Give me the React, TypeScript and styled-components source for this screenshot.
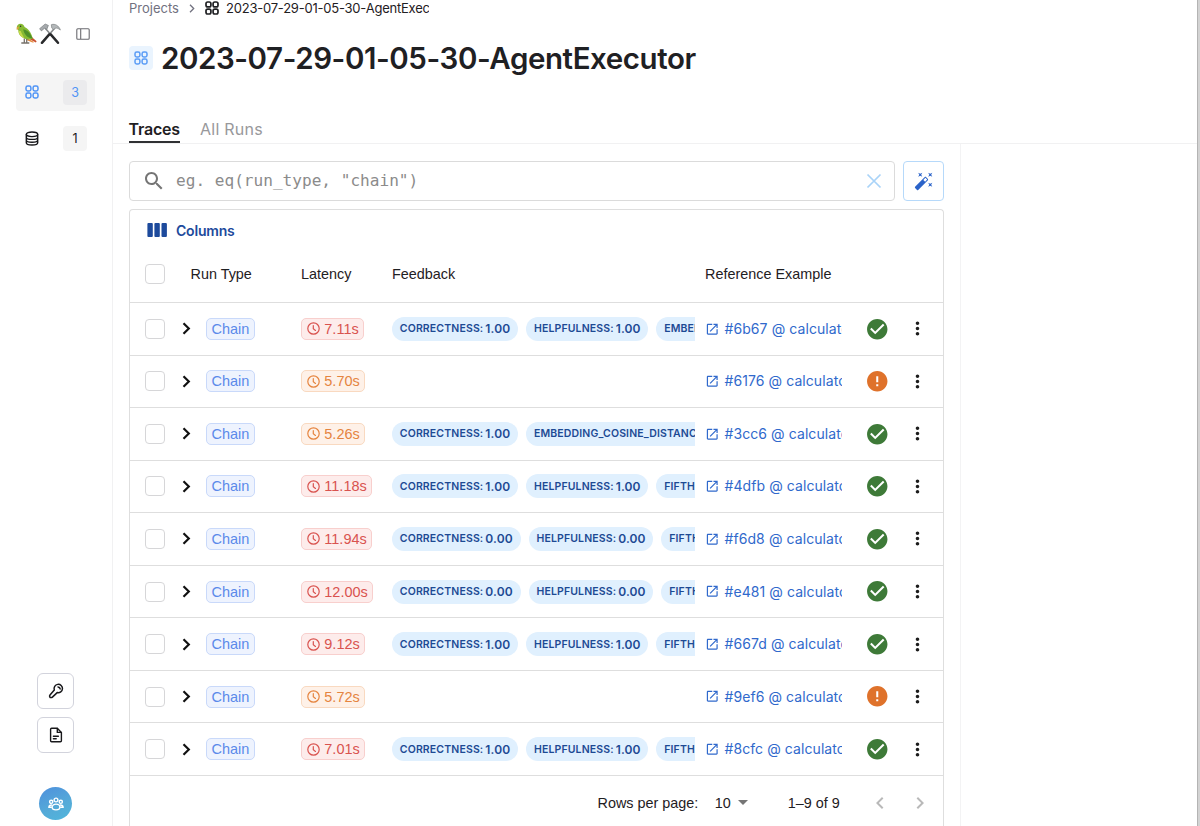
import React from "react";
import styled, { createGlobalStyle, css } from "styled-components";

const sans = `"Inter", "Liberation Sans", sans-serif`;
const grotesk = `"Liberation Sans", Arial, sans-serif`;

const GlobalStyle = createGlobalStyle`
  *, *::before, *::after { box-sizing: border-box; }
  html, body { margin: 0; padding: 0; background: #fff; }
  body { font-family: ${sans}; color: #1f2023; overflow: hidden; }
  button { font: inherit; padding: 0; background: none; border: 0; color: inherit; }
`;

/* ---------- shell ---------- */

const Shell = styled.div`
  display: flex;
  width: 100%;
  height: 826px;
  overflow: hidden;
`;

const Sidebar = styled.aside`
  display: flex;
  flex-direction: column;
  flex: 0 0 113px;
  padding: 20px 17px 6px 16px;
  border-right: 1px solid #f1f1f2;
`;

const Brand = styled.div`
  display: flex;
  align-items: center;
  gap: 1px;
  height: 28px;
  margin-bottom: 25px;
`;

const PanelIcon = styled.span`
  display: flex;
  margin-left: 14px;
  color: #6b6b70;
`;

const NavItem = styled.button<{ $active?: boolean }>`
  display: flex;
  align-items: center;
  justify-content: space-between;
  width: 79px;
  height: 38px;
  margin-bottom: 8.5px;
  padding: 0 8px 0 9px;
  border-radius: 4px;
  color: ${(p) => (p.$active ? "#4f94f6" : "#18181b")};
  background: ${(p) => (p.$active ? "#f5f5f5" : "transparent")};
`;

const NavCount = styled.span<{ $active?: boolean }>`
  display: flex;
  align-items: center;
  justify-content: center;
  width: 24px;
  height: 25px;
  border-radius: 4px;
  font-size: 12.5px;
  background: ${(p) => (p.$active ? "#ebebed" : "#f5f5f5")};
`;

const SidebarFooter = styled.div`
  display: flex;
  flex-direction: column;
  align-items: center;
  gap: 8px;
  margin-top: auto;
`;

const SquareButton = styled.button`
  display: flex;
  align-items: center;
  justify-content: center;
  width: 37px;
  height: 36px;
  border: 1px solid #d2d3dc;
  border-radius: 6px;
  color: #18181b;
`;

const Avatar = styled.div`
  display: flex;
  align-items: center;
  justify-content: center;
  width: 33px;
  height: 33px;
  margin-top: 26px;
  border-radius: 50%;
  color: #fff;
  background: linear-gradient(155deg, #4f94dc 10%, #55abd8 60%, #50b6dc 100%);
`;

const Main = styled.main`
  display: flex;
  flex-direction: column;
  flex: 1;
  min-width: 0;
`;

const ScrollTrack = styled.div`
  flex: 0 0 3px;
  background: #d3d3d3;
  border-left: 1px solid #b4b4b4;
`;

/* ---------- page header ---------- */

const Breadcrumbs = styled.nav`
  display: flex;
  align-items: center;
  height: 16px;
  padding-left: 16px;
  font-size: 13px;
`;

const CrumbLink = styled.span`
  width: 50px;
  color: #71717f;
`;

const CrumbChevron = styled.span`
  display: flex;
  width: 26px;
  justify-content: center;
  color: #71717f;
`;

const CrumbCurrent = styled.span`
  width: 203px;
  margin-left: 7px;
  overflow: hidden;
  white-space: nowrap;
  letter-spacing: -0.22px;
`;

const TitleRow = styled.div`
  display: flex;
  align-items: center;
  height: 40px;
  margin-top: 22px;
  padding-left: 16px;
`;

const TitleIcon = styled.span`
  display: flex;
  align-items: center;
  justify-content: center;
  width: 24px;
  height: 24px;
  border-radius: 4px;
  color: #5a9cf6;
  background: #eaf4fe;
`;

const Title = styled.h1`
  margin: 0 0 0 8px;
  font-size: 29.5px;
  font-weight: 600;
  letter-spacing: -0.42px;
  white-space: nowrap;
`;

const Tabs = styled.div`
  display: flex;
  gap: 20px;
  height: 28px;
  margin-top: 38px;
  padding-left: 15.5px;
  border-bottom: 1px solid #f1f1f2;
`;

const Tab = styled.button<{ $active?: boolean }>`
  height: 27px;
  font-size: 16px;
  white-space: nowrap;
  ${(p) =>
    p.$active
      ? css`
          width: 51px;
          font-weight: 600;
          letter-spacing: -0.22px;
          color: #1f2023;
          border-bottom: 2px solid #303134;
        `
      : css`
          padding: 0 0 1px 0.5px;
          letter-spacing: 0.25px;
          color: #98989b;
        `}
`;

/* ---------- content ---------- */

const Content = styled.section`
  width: 848px;
  flex: 1;
  min-height: 0;
  display: flex;
  flex-direction: column;
  gap: 8px;
  padding: 17px 16px 0 15.5px;
  border-right: 1px solid #f3f3f4;
`;

const SearchRow = styled.div`
  display: flex;
  gap: 8px;
  flex: 0 0 40px;
`;

const SearchBox = styled.div`
  display: flex;
  align-items: center;
  width: 766.5px;
  padding: 0 10px 0 12px;
  border: 1px solid #dbdbdb;
  border-radius: 4px;
  color: #757575;
`;

const SearchHint = styled.span`
  flex: 1;
  margin: 0 0 1px 10.5px;
  font-family: "DejaVu Sans Mono", monospace;
  font-size: 16.1px;
  color: #8b8b8b;
`;

const ClearIcon = styled.span`
  display: flex;
  color: #a9d3f8;
`;

const WandButton = styled.button`
  display: flex;
  align-items: center;
  justify-content: center;
  width: 41px;
  border: 1px solid #b6d9fa;
  border-radius: 4px;
  color: #2b63c9;
`;

const TablePanel = styled.div`
  flex: 1;
  width: 815px;
  border: 1px solid #dedede;
  border-bottom: 0;
  border-radius: 4px 4px 0 0;
`;

const ColumnsButton = styled.button`
  display: flex;
  align-items: center;
  gap: 9px;
  height: 40px;
  padding-left: 17.5px;
  font-size: 14px;
  font-weight: 600;
  letter-spacing: -0.2px;
  color: #1d4a9c;
`;

const gridRow = css`
  display: grid;
  grid-template-columns: 46px 30.5px 95px 91px 303px 10px 137px 70px 1fr;
  align-items: center;
  border-bottom: 1px solid #dedede;
`;

const HeaderRow = styled.div`
  ${gridRow}
  height: 53px;
  padding-bottom: 4px;
  font-family: ${grotesk};
  font-size: 14.4px;
  white-space: nowrap;
`;

const HeaderCell = styled.span<{ $from: number; $span?: number; $indent?: number }>`
  grid-column: ${(p) => p.$from} / span ${(p) => p.$span ?? 1};
  padding-left: ${(p) => p.$indent ?? 0}px;
`;

const Row = styled.div`
  ${gridRow}
  height: 52.55px;
`;

const Checkbox = styled.span`
  width: 20px;
  height: 20px;
  margin-left: 15.5px;
  border: 1px solid #d6d6d8;
  border-radius: 4px;
`;

const Expander = styled.span`
  display: flex;
  justify-content: center;
  width: 22px;
  color: #111;
`;

const tones = {
  blue: { ink: "#5b8aea", fill: "#eef3fe", line: "#c9d9fa" },
  red: { ink: "#d9534f", fill: "#fdeceb", line: "#f8cfcd" },
  orange: { ink: "#e5843f", fill: "#fef1e8", line: "#f9d9c0" },
};

const Tag = styled.span<{ $tone: keyof typeof tones }>`
  display: inline-flex;
  align-items: center;
  justify-self: start;
  gap: 4.8px;
  height: 22px;
  padding: 0 4.5px;
  border: 1px solid ${(p) => tones[p.$tone].line};
  border-radius: 5px;
  font-family: ${grotesk};
  font-size: 14.5px;
  white-space: nowrap;
  color: ${(p) => tones[p.$tone].ink};
  background: ${(p) => tones[p.$tone].fill};
`;

const FeedbackList = styled.div`
  display: flex;
  gap: 8px;
  overflow: hidden;
`;

const FeedbackChip = styled.span`
  display: flex;
  align-items: center;
  flex: none;
  gap: 2px;
  height: 24px;
  padding: 0 7.8px;
  border-radius: 12px;
  font-size: 10.5px;
  font-weight: 600;
  letter-spacing: 0.14px;
  white-space: nowrap;
  color: #1d4a94;
  background: #e0f0fe;
`;

const Score = styled.b`
  font-size: 12px;
  font-weight: 600;
`;

const ExampleLink = styled.a`
  grid-column: 7;
  display: flex;
  align-items: center;
  gap: 5px;
  padding-bottom: 1px;
  overflow: hidden;
  white-space: nowrap;
  font-size: 14px;
  letter-spacing: 0.08px;
  color: #3069cc;
`;

const LinkIcon = styled.span`
  display: flex;
  flex: none;
  padding-top: 1px;
`;

const Status = styled.span<{ $ok: boolean }>`
  display: flex;
  justify-content: center;
  color: ${(p) => (p.$ok ? "#3e7a38" : "#df722b")};
`;

const More = styled.span`
  display: flex;
  margin-left: -5.5px;
  color: #1c1c1c;
`;

const Pagination = styled.footer`
  display: flex;
  align-items: center;
  height: 54px;
  padding-left: 468px;
  font-family: ${grotesk};
  font-size: 14.4px;
  white-space: nowrap;
`;

const PageSize = styled.span`
  display: flex;
  align-items: center;
  width: 73px;
  margin-left: 16.5px;
`;

const Caret = styled.span`
  width: 0;
  margin-left: 7px;
  border: 5.2px solid transparent;
  border-top-color: #757575;
  border-bottom: 0;
`;

const PageArrow = styled.span<{ $gap: number }>`
  display: flex;
  margin-left: ${(p) => p.$gap}px;
  color: #b9b9b9;
`;

/* ---------- icons ---------- */

const GridIcon = ({ size = 14, weight = 1.5 }: { size?: number; weight?: number }) => (
  <svg width={size} height={size} viewBox="0 0 14 14" fill="none" stroke="currentColor" strokeWidth={weight}>
    <rect x="1" y="1" width="4.9" height="4.9" rx="1.700" />
    <rect x="8.100" y="1" width="4.900" height="4.900" rx="1.700" />
    <rect x="1" y="8.100" width="4.900" height="4.900" rx="1.700" />
    <rect x="8.100" y="8.100" width="4.900" height="4.900" rx="1.700" />
  </svg>
);

const Parrot = () => (
  <svg width="22" height="22" viewBox="0 0 22 22">
    <path d="M14 12.500l6.600 5.700-.7 1.400-7.700-4.200z" fill="#c8502d" />
    <path d="M10.500 14.500l7.800 4.700-1.800.4-6.600-2.800z" fill="#e58a3a" />
    <path d="M.8 5C.6 2.400 2.300.8 4.500.8c2.300 0 3.500 1.300 4.100 3.300 3 1.400 5.400 3.900 7 7.900l1.200 3.400c-2.400 1.300-5.800 1.500-8.300.1C4.800 13.800 2.200 11.300 2.400 7.500z" fill="#86ba33" />
    <path d="M7.200 6.200c3.300.5 6 2.700 7.900 6.200l1.500 3c-4.500-.2-8.500-3.500-9.400-9.200z" fill="#4f9029" />
    <path d="M2.600 7.800c.2 3.300 2.300 6.200 5.400 7.700-.2-2.400-2.600-4.400-3.200-7.400z" fill="#c6d94a" />
    <path d="M2.600 3.400C.8 3.400.2 4.900.8 7c1.200-.3 2.100-1.300 2.200-2.400z" fill="#d9a441" />
    <circle cx="4.600" cy="3.300" r=".7" fill="#2b2b20" />
    <path d="M8.300 15.500v4.200M10.700 15.900v3.800M5.300 20h8" stroke="#77716a" strokeWidth="1.300" fill="none" />
  </svg>
);

const Tools = () => (
  <svg width="22" height="22" viewBox="0 0 22 22" fill="none">
    <path d="M6 5l12.300 14M15.800 5L3.700 19" stroke="#85888a" strokeWidth="1.600" />
    <path d="M11.700 11.400L19 19.800M10.300 11.400L2.900 19.800" stroke="#292a2c" strokeWidth="2.500" strokeLinecap="round" />
    <path d="M.6 5.700L6.200 1l3.200 1.400L7.800 6.400 5.600 5.200 2.400 7.900z" fill="#a6aaad" stroke="#6f7376" strokeWidth=".6" />
    <path d="M12.300 1.700c3.700-1.300 7.400.8 9.100 5.300-1.900-1.500-3.600-2.200-5.200-1.800l-1.500 1.600-1.900-1.700z" fill="#b4b8ba" stroke="#6f7376" strokeWidth=".6" />
  </svg>
);

const SidebarToggle = () => (
  <svg width="14" height="12" viewBox="0 0 14 12" fill="none" stroke="currentColor" strokeWidth="1.100">
    <rect x=".8" y=".8" width="12.400" height="10.400" rx="1" />
    <path d="M4.700 1v10" />
  </svg>
);

const DatabaseIcon = () => (
  <svg width="14" height="15" viewBox="0 0 14 15" fill="none" stroke="currentColor" strokeWidth="1.400">
    <ellipse cx="7" cy="3.300" rx="5.700" ry="2.300" />
    <path d="M1.300 3.300v8.400C1.300 13 3.900 14 7 14s5.700-1 5.700-2.300V3.300M1.300 6.200C1.300 7.400 3.900 8.400 7 8.400s5.700-1 5.700-2.200M1.300 9C1.300 10.200 3.900 11.200 7 11.200s5.700-1 5.700-2.200" />
  </svg>
);

const KeyIcon = () => (
  <svg width="16" height="16" viewBox="0 0 16 16" fill="none" stroke="currentColor" strokeWidth="1.500" strokeLinejoin="round" strokeLinecap="round">
    <path d="M6.300 6.900a4.200 4.200 0 1 1 2.900 2.700L4.400 14.100c-.6.500-1.400.5-2.400.3-.6-.9-.6-1.800 0-2.500z" />
    <path d="M10 3.900c1.200.1 2 .9 2.200 2" />
  </svg>
);

const DocIcon = () => (
  <svg width="14" height="16" viewBox="0 0 14 16" fill="none" stroke="currentColor" strokeWidth="1.400" strokeLinejoin="round" strokeLinecap="round">
    <path d="M8.300 1.300H2.600c-.6 0-1 .4-1 1v11.400c0 .6.4 1 1 1h8.800c.6 0 1-.4 1-1V5.400z" />
    <path d="M8.300 1.500v3.900h3.900M4.400 9.300h5M4.400 11.700h2.800" />
  </svg>
);

const PeopleIcon = () => (
  <svg width="16" height="14" viewBox="0 0 16 14" fill="none" stroke="currentColor" strokeWidth="1.400" strokeLinecap="round">
    <circle cx="8" cy="3" r="1.900" />
    <circle cx="3.200" cy="4.800" r="1.600" />
    <circle cx="12.800" cy="4.800" r="1.600" />
    <ellipse cx="8" cy="10" rx="3.900" ry="2.900" />
    <path d="M3.600 8C2 8.100.9 8.900.9 10.300h2.400M12.400 8c1.600.1 2.700.9 2.700 2.300h-2.400" />
  </svg>
);

const FilledIcon = ({ d, size }: { d: string; size: number }) => (
  <svg width={size} height={size} viewBox="0 0 24 24" fill="currentColor">
    <path d={d} />
  </svg>
);

const paths = {
  search:
    "M15.500 14h-.79l-.28-.27C15.410 12.590 16 11.110 16 9.500 16 5.910 13.090 3 9.500 3S3 5.910 3 9.500 5.910 16 9.500 16c1.610 0 3.090-.59 4.230-1.570l.27.28v.79l5 4.990L20.490 19l-4.990-5zm-6 0C7.010 14 5 11.990 5 9.500S7.010 5 9.500 5 14 7.010 14 9.500 11.990 14 9.500 14z",
  wand:
    "M7.500 5.600L10 7 8.600 4.500 10 2 7.500 3.400 5 2l1.400 2.500L5 7zm12 9.800L17 14l1.400 2.500L17 19l2.500-1.400L22 19l-1.400-2.500L22 14zM22 2l-2.500 1.400L17 2l1.400 2.500L17 7l2.500-1.400L22 7l-1.400-2.500zm-7.630 5.290c-.39-.39-1.020-.39-1.410 0L1.290 18.960c-.39.39-.39 1.020 0 1.410l2.340 2.340c.39.39 1.020.39 1.410 0L16.700 11.050c.39-.39.39-1.020 0-1.410l-2.330-2.350zm-1.030 5.490l-2.120-2.120 2.440-2.440 2.120 2.120-2.440 2.440z",
  chevronRight: "M10 6L8.590 7.410 13.170 12l-4.580 4.590L10 18l6-6z",
  chevronLeft: "M15.410 7.410L14 6l-6 6 6 6 1.410-1.410L10.830 12z",
  launch:
    "M19 19H5V5h7V3H5c-1.110 0-2 .9-2 2v14c0 1.100.89 2 2 2h14c1.100 0 2-.9 2-2v-7h-2v7zM14 3v2h3.590l-9.830 9.830 1.410 1.410L19 6.410V10h2V3h-7z",
  check:
    "M12 2C6.480 2 2 6.480 2 12s4.480 10 10 10 10-4.480 10-10S17.520 2 12 2zm-2 15l-5-5 1.410-1.410L10 14.170l7.590-7.590L19 8l-9 9z",
  error:
    "M12 2C6.480 2 2 6.480 2 12s4.480 10 10 10 10-4.480 10-10S17.520 2 12 2zm1 15h-2v-2h2v2zm0-4h-2V7h2v6z",
  more:
    "M12 8c1.100 0 2-.9 2-2s-.9-2-2-2-2 .9-2 2 .9 2 2 2zm0 2c-1.100 0-2 .9-2 2s.9 2 2 2 2-.9 2-2-.9-2-2-2zm0 6c-1.100 0-2 .9-2 2s.9 2 2 2 2-.9 2-2-.9-2-2-2z",
};

const ThinChevron = () => (
  <svg width="6" height="9" viewBox="0 0 6 9" fill="none" stroke="currentColor" strokeWidth="1.300">
    <path d="M1 .8l3.700 3.700L1 8.200" />
  </svg>
);

const BoldChevron = () => (
  <svg width="9" height="13" viewBox="0 0 9 13" fill="none" stroke="currentColor" strokeWidth="2.200">
    <path d="M1.500 1.300l5.300 5.200-5.300 5.200" />
  </svg>
);

const ColumnsIcon = () => (
  <svg width="20" height="14" viewBox="0 0 20 14" fill="currentColor">
    <rect x=".4" width="5.400" height="14" rx="1" />
    <rect x="7.400" width="5.400" height="14" rx="1" />
    <rect x="14.500" width="5.400" height="14" rx="1" />
  </svg>
);

const ClockIcon = () => (
  <svg width="13" height="13" viewBox="0 0 13 13" fill="none" stroke="currentColor" strokeWidth="1.200" strokeLinecap="round">
    <circle cx="6.500" cy="6.500" r="5.700" />
    <path d="M6.300 3.600v3.200l2.200 1.600" />
  </svg>
);

/* ---------- data ---------- */

type Run = {
  latency: string;
  slow: boolean;
  feedback: [string, string][];
  example: string;
};

const run = (latency: string, slow: boolean, example: string, feedback: [string, string][] = []): Run => ({
  latency,
  slow,
  example,
  feedback,
});

const scored = (score: string, third: string): [string, string][] => [
  ["CORRECTNESS:", score],
  ["HELPFULNESS:", score],
  [third, score],
];

const runs: Run[] = [
  run("7.11s", true, "#6b67", scored("1.00", "EMBEDDING_COSINE_DISTANCE:")),
  run("5.70s", false, "#6176"),
  run("5.26s", false, "#3cc6", [
    ["CORRECTNESS:", "1.00"],
    ["EMBEDDING_COSINE_DISTANCE:", "0.00"],
  ]),
  run("11.18s", true, "#4dfb", scored("1.00", "FIFTH")),
  run("11.94s", true, "#f6d8", scored("0.00", "FIFTH")),
  run("12.00s", true, "#e481", scored("0.00", "FIFTH")),
  run("9.12s", true, "#667d", scored("1.00", "FIFTH")),
  run("5.72s", false, "#9ef6"),
  run("7.01s", true, "#8cfc", scored("1.00", "FIFTH")),
];

const RunRow = ({ item }: { item: Run }) => {
  const ok = item.feedback.length > 0;
  return (
    <Row>
      <Checkbox />
      <Expander>
        <BoldChevron />
      </Expander>
      <Tag $tone="blue">Chain</Tag>
      <Tag $tone={item.slow ? "red" : "orange"}>
        <ClockIcon />
        {item.latency}
      </Tag>
      <FeedbackList>
        {item.feedback.map(([name, score]) => (
          <FeedbackChip key={name}>
            {name}
            <Score>{score}</Score>
          </FeedbackChip>
        ))}
      </FeedbackList>
      <ExampleLink>
        <LinkIcon>
          <FilledIcon d={paths.launch} size={14.5} />
        </LinkIcon>
        {item.example} @ calculator
      </ExampleLink>
      <Status $ok={ok}>
        <FilledIcon d={ok ? paths.check : paths.error} size={24.5} />
      </Status>
      <More>
        <FilledIcon d={paths.more} size={21} />
      </More>
    </Row>
  );
};

export default function App() {
  return (
    <Shell>
      <GlobalStyle />
      <Sidebar>
        <Brand>
          <Parrot />
          <Tools />
          <PanelIcon>
            <SidebarToggle />
          </PanelIcon>
        </Brand>
        <NavItem $active>
          <GridIcon />
          <NavCount $active>3</NavCount>
        </NavItem>
        <NavItem>
          <DatabaseIcon />
          <NavCount>1</NavCount>
        </NavItem>
        <SidebarFooter>
          <SquareButton>
            <KeyIcon />
          </SquareButton>
          <SquareButton>
            <DocIcon />
          </SquareButton>
          <Avatar>
            <PeopleIcon />
          </Avatar>
        </SidebarFooter>
      </Sidebar>
      <Main>
        <Breadcrumbs>
          <CrumbLink>Projects</CrumbLink>
          <CrumbChevron>
            <ThinChevron />
          </CrumbChevron>
          <GridIcon weight={1.7} />
          <CrumbCurrent>2023-07-29-01-05-30-AgentExecutor</CrumbCurrent>
        </Breadcrumbs>
        <TitleRow>
          <TitleIcon>
            <GridIcon />
          </TitleIcon>
          <Title>2023-07-29-01-05-30-AgentExecutor</Title>
        </TitleRow>
        <Tabs>
          <Tab $active>Traces</Tab>
          <Tab>All Runs</Tab>
        </Tabs>
        <Content>
          <SearchRow>
            <SearchBox>
              <FilledIcon d={paths.search} size={24} />
              <SearchHint>eg. eq(run_type, "chain")</SearchHint>
              <ClearIcon>
                <svg width="20" height="20" viewBox="0 0 20 20" fill="none" stroke="currentColor" strokeWidth="1.7">
                  <path d="M3.500 3.500l13 13M16.500 3.500l-13 13" />
                </svg>
              </ClearIcon>
            </SearchBox>
            <WandButton>
              <FilledIcon d={paths.wand} size={20} />
            </WandButton>
          </SearchRow>
          <TablePanel>
            <ColumnsButton>
              <ColumnsIcon />
              Columns
            </ColumnsButton>
            <HeaderRow>
              <Checkbox />
              <HeaderCell $from={2} $span={2} $indent={15}>
                Run Type
              </HeaderCell>
              <HeaderCell $from={4}>Latency</HeaderCell>
              <HeaderCell $from={5}>Feedback</HeaderCell>
              <HeaderCell $from={7}>Reference Example</HeaderCell>
            </HeaderRow>
            {runs.map((item) => (
              <RunRow key={item.example} item={item} />
            ))}
            <Pagination>
              Rows per page:
              <PageSize>
                10
                <Caret />
              </PageSize>
              1–9 of 9
              <PageArrow $gap={28}>
                <FilledIcon d={paths.chevronLeft} size={24} />
              </PageArrow>
              <PageArrow $gap={16.5}>
                <FilledIcon d={paths.chevronRight} size={24} />
              </PageArrow>
            </Pagination>
          </TablePanel>
        </Content>
      </Main>
      <ScrollTrack />
    </Shell>
  );
}
